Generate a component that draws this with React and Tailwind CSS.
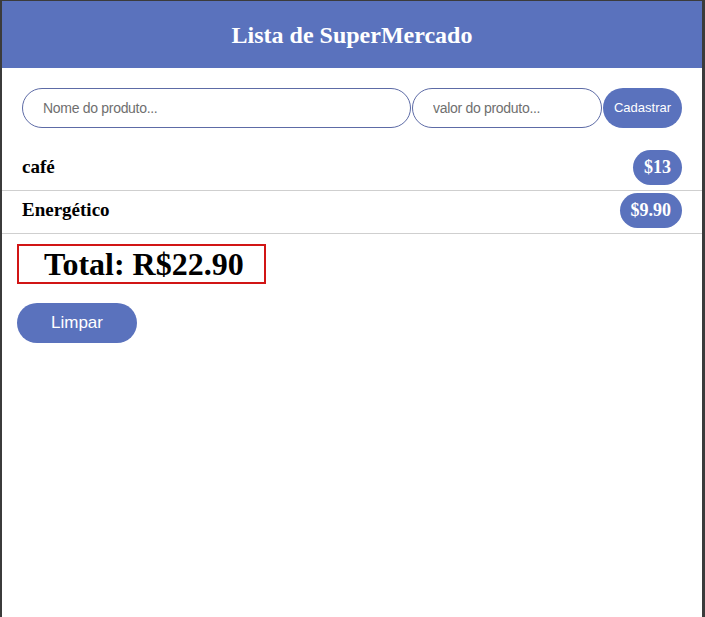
import { useState } from 'react';

const serif = { fontFamily: '"Liberation Serif", "Times New Roman", serif' };

export default function App() {
    const [nome, setNome] = useState('');
    const [valor, setValor] = useState('');
    const [itens, setItens] = useState([
        { nome: 'café', valor: 13 },
        { nome: 'Energético', valor: 9.9 },
    ]);

    const total = itens.reduce((soma, item) => soma + item.valor, 0);

    const cadastrar = () => {
        if (!nome.trim() || !valor) return;
        setItens([...itens, { nome: nome.trim(), valor: parseFloat(valor) }]);
        setNome('');
        setValor('');
    };

    return (
        <div className="min-h-screen bg-[#3b3b3b] pt-[1px] pl-[2px] pr-[3px]">
            <div className="min-h-[616px] bg-white font-['Liberation_Sans',Arial,sans-serif]">
                {/* Cabeçalho */}
                <header className="h-[67px] bg-[#5a72bd] flex items-center justify-center">
                    <h1 style={serif} className="text-white text-[24px] font-bold">
                        Lista de SuperMercado
                    </h1>
                </header>

                {/* Formulário */}
                <div className="flex px-5 pt-5 gap-[1px]">
                    <input
                        value={nome}
                        onChange={e => setNome(e.target.value)}
                        placeholder="Nome do produto..."
                        className="w-[389px] h-[40px] rounded-full border border-[#5d6ba6] pl-5 text-[14px] tracking-[-0.3px] placeholder:text-[#6f6f6f] outline-none"
                    />
                    <input
                        value={valor}
                        onChange={e => setValor(e.target.value)}
                        placeholder="valor do produto..."
                        className="w-[190px] h-[40px] rounded-full border border-[#5d6ba6] pl-5 text-[14px] tracking-[-0.3px] placeholder:text-[#6f6f6f] outline-none"
                    />
                    <button
                        onClick={cadastrar}
                        className="flex-1 h-[40px] rounded-full bg-[#5a72bd] text-white text-[13px]"
                    >
                        Cadastrar
                    </button>
                </div>

                {/* Lista */}
                <ul className="mt-5">
                    {itens.map((item, i) => (
                        <li
                            key={i}
                            className="flex items-center justify-between pl-5 pr-5 pt-[2px] pb-[5px] border-b border-[#cfcfcf]"
                        >
                            <span style={serif} className="text-[19px] font-bold text-black">
                                {item.nome}
                            </span>
                            <span
                                style={serif}
                                className="h-[35px] px-[11px] rounded-full bg-[#5a72bd] text-white text-[18px] font-bold flex items-center"
                            >
                                ${Number.isInteger(item.valor) ? item.valor : item.valor.toFixed(2)}
                            </span>
                        </li>
                    ))}
                </ul>

                {/* Total */}
                <div className="ml-[15px] mt-[10px] w-[249px] h-[40px] border-2 border-[#d11515] pl-[25px] flex items-center">
                    <span style={serif} className="text-[32px] font-bold text-black leading-none">
                        Total: R${total.toFixed(2)}
                    </span>
                </div>

                <button
                    onClick={() => setItens([])}
                    className="ml-[15px] mt-[19px] w-[120px] h-[40px] rounded-full bg-[#5a72bd] text-white text-[17px]"
                >
                    Limpar
                </button>
            </div>
        </div>
    );
}
